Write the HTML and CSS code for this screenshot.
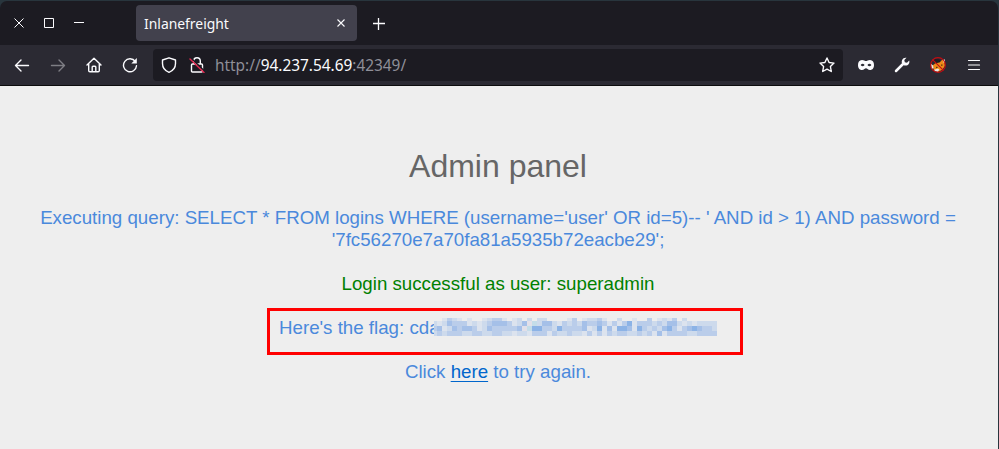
FILE: index.html
```html
<!DOCTYPE html>
<html lang="en">
<head>
<meta charset="utf-8">
<title>Inlanefreight</title>
<link rel="stylesheet" href="styles.css">
</head>
<body>
<div class="window">
  <header class="tabbar">
    <svg class="controls" width="90" height="20" viewBox="0 0 90 20" fill="none" stroke="#fbfbfe"><path d="M14.5 8.500l9 9M23.500 8.500l-9 9"/><path d="M44.500 8.500h9v9h-9zM74 12.500h10"/></svg>
    <div class="tab"><span>Inlanefreight</span><svg width="10" height="10" viewBox="0 0 10 10" stroke="#fbfbfe" stroke-width="1.1"><path d="M1.500 1.500l7 7M8.500 1.500l-7 7"/></svg></div>
    <svg class="plus" width="12" height="12" viewBox="0 0 12 12" stroke="#fbfbfe" stroke-width="1.300"><path d="M5.500 0v12M0 5.500h12"/></svg>
  </header>
  <nav class="toolbar">
    <div class="nav-buttons">
      <svg width="16" height="16" viewBox="0 0 16 16"><path d="M14.500 8.500H1.500M7 3L1.500 8.500L7 14"/></svg>
      <svg class="dim" width="16" height="16" viewBox="0 0 16 16"><path d="M1.500 8.500h13M9 3L14.500 8.500L9 14"/></svg>
      <svg width="16" height="16" viewBox="0 0 16 16"><path d="M1 8L8 1.300L15 8M2.700 7v6.500q0 1.200 1.200 1.200h8.200q1.200 0 1.200-1.200V7M6.200 14.500V10q0-.8.8-.8h2q.8 0 .8.8v4.500"/></svg>
      <svg width="16" height="16" viewBox="0 0 16 16"><path d="M13.300 4.500A6.500 6.500 0 1 0 14.500 8.700"/><path class="solid" d="M14.800 1v5.500H9.300z"/></svg>
    </div>
    <div class="urlbar">
      <svg width="16" height="16" viewBox="0 0 16 16"><path d="M8 .8L14.500 3v3.500C14.500 11 12 13.800 8 15.300C4 13.800 1.500 11 1.500 6.500V3z"/></svg>
      <svg class="lock" width="16" height="16" viewBox="0 0 16 16"><path d="M4.700 7V4a3.300 3.300 0 0 1 6.600 0v3M3.500 7h9q1 0 1 1v6q0 1-1 1h-9q-1 0-1-1V8q0-1 1-1z"/><path class="gap" d="M2 1l14 13.500"/><path class="slash" d="M1 2l14 13.500"/></svg>
      <div class="url">http://<b>94.237.54.69</b>:42349/</div>
      <svg class="star" width="16" height="16" viewBox="0 0 16 16"><path d="M8 1l2.100 4.500 4.900.6-3.600 3.400.9 5L8 12.100l-4.300 2.400.9-5L1 6.100l4.900-.6z"/></svg>
    </div>
    <div class="extensions">
      <svg width="16" height="16" viewBox="0 0 16 16"><path class="solid" fill-rule="evenodd" d="M4 3C6 3 6.800 4.100 8 4.100S10 3 12 3c2.800 0 4 2.200 4 5s-1.200 5-4 5c-2.200 0-2.800-1.700-4-1.700S6.200 13 4 13c-2.800 0-4-2.200-4-5s1.200-5 4-5zM2.600 8q2 2.400 4 0-2-2.600-4 0zM9.400 8q2 2.400 4 0-2-2.600-4 0z"/></svg>
      <svg width="16" height="16" viewBox="0 0 16 16"><path d="M2 14l6.500-6.500" stroke-width="2.500"/><path class="solid" d="M12.500.8L10.300 3l.5 2.200 2.200.5 2.200-2.200c.8 2.500-.9 5.200-3.700 5.100-1.400 0-2.300-.5-3-1.200C6.400 4 9 0 12.500.8z"/></svg>
      <svg width="16" height="16" viewBox="0 0 16 16"><g stroke="none"><path fill="#1c1b22" d="M3.500 2.200l6 .3 1 2.500-5 2z"/><path fill="#ee8a18" d="M2.500 8.500l3-2.300 4-.7 3-3 2 1.500.3 5L12.500 12.500 8.500 14.800 4 13.500z"/><path fill="#e8e8ea" d="M1 6.800l2 1.700.6 2.800-2 .5zM13 3l1.800-.8.2 3.300-1.200.5zM4.200 12.800l3.800-1.300 1.500 1.200-2 2-2.500-.5z"/><path fill="#5a3513" d="M6 9.800h1.600v1.200H6zM11 7.500h1.500v1.300H11z"/></g><circle cx="8" cy="8" r="7.400" stroke="#c30c12" stroke-width="1.100"/><path d="M2.800 2.800l10.400 10.400" stroke="#c30c12" stroke-width="1.100"/></svg>
      <svg width="16" height="16" viewBox="0 0 16 16"><path d="M2.500 3.500h11M2.500 8h11M2.500 12.500h11" stroke-width="1.200"/></svg>
    </div>
  </nav>
  <main class="page">
    <h1>Admin panel</h1>
    <p class="query">Executing query: SELECT * FROM logins WHERE (username='user' OR id=5)-- ' AND id &gt; 1) AND password =<br>'7fc56270e7a70fa81a5935b72eacbe29';</p>
    <p class="success">Login successful as user: superadmin</p>
    <div class="flag"><span>Here's the flag: cda</span><svg id="mosaic" width="283" height="18" viewBox="0 0 283 18" shape-rendering="crispEdges"></svg></div>
    <p>Click <a href="#">here</a> to try again.</p>
  </main>
</div>
<script src="mosaic.js"></script>
</body>
</html>
```
FILE: mosaic.js
```js
// Pixelated cover over the hidden part of the flag: one digit per cell, 0 = background.
const shades = { 0: '#eeeeee', 1: '#dce3ee', 2: '#cddaec', 3: '#bacdea', 4: '#a5c0e8', 5: '#8cb3e6', p: '#e2e0e9', c: '#c4dde9' };
const rows = [
  '001321010012331012020220000130122310020010030121302132000',
  '2124333121234443124pc244213232433431313513332323443444431',
  '341243443124333334pc5533253333412514155415323243434354432',
  '2323332233223322pc213331322322131313233223231413333223333'
];
// Last columns taper out in the two upper rows.
rows[1] = rows[1].slice(0, 47) + '4421212222';
rows[2] = rows[2].slice(0, 47) + '5313454332';
rows[3] = rows[3].slice(0, 16) + '12' + rows[3].slice(18);
rows[0] = rows[0].slice(0, 51) + '000000';
const tops = [0, 3, 8, 13];
document.getElementById('mosaic').innerHTML = rows.map((row, r) =>
  [...row].slice(0, 57).map((k, i) =>
    `<rect x="${i ? i * 5 - 2 : 0}" y="${tops[r]}" width="${i ? 5 : 3}" height="${r ? 5 : 3}" fill="${shades[k]}"/>`
  ).join('')).join('');
```
FILE: styles.css
```css
* { box-sizing: border-box; }
body { margin: 0; background: #28353d; }
.window { width: 998px; height: 449px; padding-top: 1px; overflow: hidden; }
.tabbar { height: 44px; background: #1c1b22; display: flex; align-items: flex-start; border-radius: 7px 7px 0 0; }
.controls { margin: 9px 46px 0 0; }
.tab { width: 221px; height: 36px; margin-top: 4px; padding: 0 11px 0 8px; border-radius: 4px; background: #42414d; color: #fbfbfe; display: flex; justify-content: space-between; align-items: center; font: 13.9px "Noto Sans", sans-serif; }
.plus { margin: 17px 0 0 16px; }
.toolbar { height: 41px; background: #2b2a33; border-bottom: 1px solid #0c0c0d; display: flex; align-items: center; padding: 0 16px 0 14px; }
.toolbar svg { display: block; flex: none; fill: none; stroke: #fbfbfe; stroke-width: 1.4; stroke-linejoin: round; stroke-linecap: round; }
.toolbar .dim { opacity: .4; }
.toolbar .solid { fill: #fbfbfe; stroke: none; }
.toolbar .slash { stroke: #e22850; }
.toolbar .gap { stroke: #1c1b22; }
.nav-buttons { display: flex; gap: 20px; width: 139px; }
.urlbar { width: 690px; height: 32px; border-radius: 4px; background: #1c1b22; display: flex; align-items: center; padding: 0 8px; }
.lock { margin-left: 12px; }
.url { margin-left: 10px; color: #8f8f98; font: 15.4px "Noto Sans", sans-serif; }
.url b { color: #fbfbfe; font-weight: 400; }
.star { margin-left: auto; }
.extensions { display: flex; gap: 20px; margin-left: 15px; }
.page { height: 363px; background: #eee; padding: 60px 2px 0 0; text-align: center; color: #4a89dc; font: 18.72px/22px "Liberation Sans", sans-serif; }
h1 { margin: 0; font-size: 32px; line-height: 40px; font-weight: 400; color: #666; }
p { margin: 22px 0 0; }
.query { margin-top: 21px; }
.success { color: #008000; }
.flag { width: 476px; height: 47px; margin: 13px 0 0 267px; border: 3px solid #f00; display: flex; padding: 6px 0 0 9px; text-align: left; }
.flag span { width: 155px; white-space: nowrap; }
#mosaic { position: relative; flex: none; margin-top: 1px; }
.flag + p { margin-top: 6px; }
a { color: #0066cc; text-decoration: underline; text-decoration-thickness: 1px; text-underline-offset: 3px; }
```
